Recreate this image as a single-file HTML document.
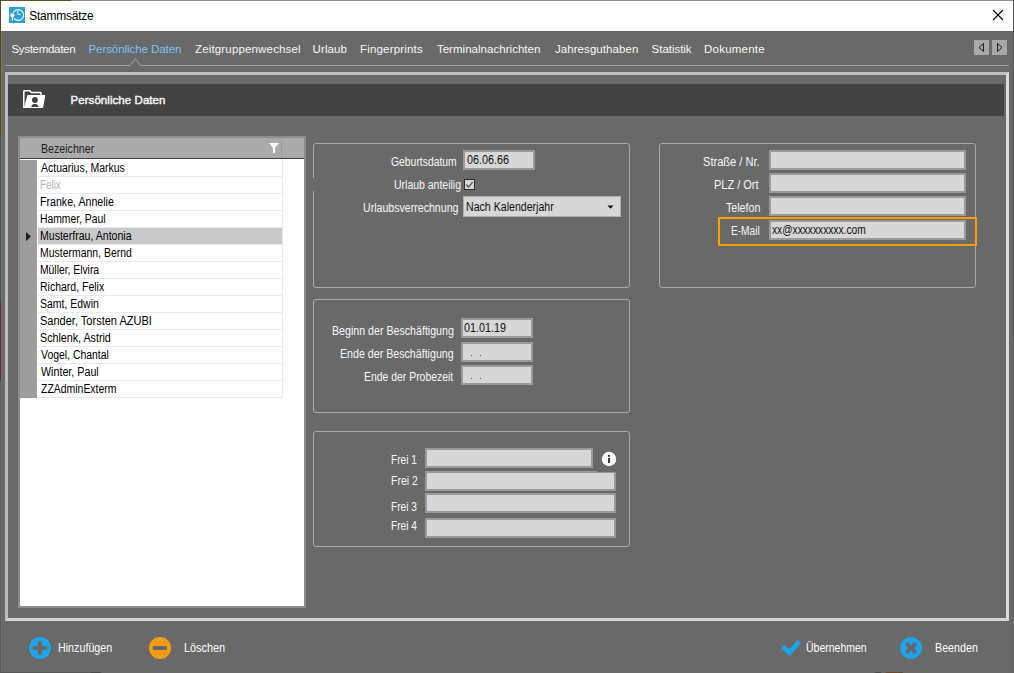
<!DOCTYPE html>
<html><head><meta charset="utf-8"><style>
html,body{margin:0;padding:0;}
body{width:1014px;height:673px;background:#696969;position:relative;overflow:hidden;font-family:"Liberation Sans", sans-serif;}
.t{position:absolute;line-height:0;white-space:pre;transform-origin:0 0;}
</style></head><body>
<div style='position:absolute;left:0px;top:0px;width:1014px;height:31px;box-sizing:border-box;background:#fff'></div><div style='position:absolute;left:0px;top:0px;width:1014px;height:1px;box-sizing:border-box;background:#8e8e8e'></div><div style='position:absolute;left:0px;top:0px;width:71px;height:1px;box-sizing:border-box;background:#6b4f22'></div><div style='position:absolute;left:0px;top:0px;width:1px;height:136px;box-sizing:border-box;background:#5e4520'></div><div style='position:absolute;left:0px;top:136px;width:1px;height:165px;box-sizing:border-box;background:#3f5a3c'></div><div style='position:absolute;left:0px;top:301px;width:1px;height:80px;box-sizing:border-box;background:#5a3030'></div><div style='position:absolute;left:0px;top:381px;width:1px;height:292px;box-sizing:border-box;background:#5c5c5c'></div><div style='position:absolute;left:1013px;top:0px;width:1px;height:341px;box-sizing:border-box;background:#555555'></div><div style='position:absolute;left:1013px;top:341px;width:1px;height:332px;box-sizing:border-box;background:#626262'></div><div style='position:absolute;left:1px;top:31px;width:1px;height:270px;box-sizing:border-box;background:#74787c'></div><div style='position:absolute;left:1px;top:301px;width:1px;height:372px;box-sizing:border-box;background:#6e7072'></div><div style='position:absolute;left:0px;top:672px;width:91px;height:1px;box-sizing:border-box;background:#575757'></div><div style='position:absolute;left:91px;top:672px;width:10px;height:1px;box-sizing:border-box;background:#4a4a4a'></div><div style='position:absolute;left:875px;top:672px;width:6px;height:1px;box-sizing:border-box;background:#4a4a4a'></div><div style='position:absolute;left:886px;top:672px;width:17px;height:1px;box-sizing:border-box;background:#6a4a2a'></div><svg style='position:absolute;left:9px;top:7px' width='16' height='16' viewBox='0 0 16 16'><rect width='16' height='16' fill='#2aa0dc'/><circle cx='9.2' cy='8' r='5.4' fill='none' stroke='#fff' stroke-width='1.1'/><path d='M8.9 3.8 V7.6 H11.6' fill='none' stroke='#fff' stroke-width='1'/><circle cx='3.4' cy='8.6' r='3.2' fill='#2aa0dc'/><rect x='2.2' y='11' width='2.4' height='4' fill='#2aa0dc'/><circle cx='3.4' cy='8.4' r='2.1' fill='#fff'/><rect x='2.8' y='9.5' width='1.2' height='4.2' fill='#fff'/></svg><svg style='position:absolute;left:992px;top:9px' width='12' height='12' viewBox='0 0 12 12'><path d='M1 1 L11 11 M11 1 L1 11' stroke='#000' stroke-width='1.1'/></svg><svg style='position:absolute;left:0;top:55px' width='1014' height='14' viewBox='0 0 1014 14'><path d='M5 10.5 H130 L135.5 3.5 L140.3 10.5 H1009' fill='none' stroke='#a3a3a3' stroke-width='1'/></svg><div style='position:absolute;left:974px;top:40px;width:15px;height:15px;box-sizing:border-box;background:#a8a8a8'></div><div style='position:absolute;left:992px;top:40px;width:15px;height:15px;box-sizing:border-box;background:#a8a8a8'></div><svg style='position:absolute;left:974px;top:40px' width='15' height='15' viewBox='0 0 15 15'><path d='M9.5 3.5 L5 7.5 L9.5 11.5 Z' fill='none' stroke='#1a1a1a' stroke-width='1'/></svg><svg style='position:absolute;left:992px;top:40px' width='15' height='15' viewBox='0 0 15 15'><path d='M5.5 3.5 L10 7.5 L5.5 11.5 Z' fill='none' stroke='#1a1a1a' stroke-width='1'/></svg><div style='position:absolute;left:5px;top:72px;width:1004px;height:549px;box-sizing:border-box;border:3px solid;border-color:#c0c0c0 #dcdcdc #d4d4d4 #bcbcbc'></div><div style='position:absolute;left:8px;top:84px;width:996px;height:32px;box-sizing:border-box;background:#434343'></div><svg style='position:absolute;left:18px;top:86px' width='32' height='28' viewBox='0 0 32 28'><path d='M5.8 21.2 V5.5 Q5.8 4.8 6.5 4.8 H11.8 L13.4 6.6 H22.3 Q23 6.6 23 7.3 V9' fill='none' stroke='#fff' stroke-width='1.5'/><path d='M9.4 9 H26.6 Q27.3 9 27.2 9.7 L25.2 21.3 Q25 22 24.3 22 H5 V21 L6.4 20.4 Z' fill='#fff'/><circle cx='16.9' cy='14' r='2.9' fill='#434343'/><path d='M13 20.9 L14.6 18.4 Q15 18 15.6 18 H18.2 Q18.8 18 19.2 18.4 L20.8 20.9 Z' fill='#434343'/></svg><div style='position:absolute;left:18px;top:136px;width:288px;height:472px;box-sizing:border-box;background:#fff;border:2px solid #8d8d8d'></div><div style='position:absolute;left:20px;top:138px;width:284px;height:20px;box-sizing:border-box;background:#aaaaaa'></div><div style='position:absolute;left:281px;top:140px;width:1px;height:18px;box-sizing:border-box;background:#9c9c9c'></div><div style='position:absolute;left:20px;top:158px;width:284px;height:1px;box-sizing:border-box;background:#404040'></div><div style='position:absolute;left:20px;top:160px;width:17px;height:238px;box-sizing:border-box;background:#9d9d9d'></div><div style='position:absolute;left:38px;top:176px;width:244px;height:1px;box-sizing:border-box;background:#eaeaea'></div><div style='position:absolute;left:38px;top:193px;width:244px;height:1px;box-sizing:border-box;background:#eaeaea'></div><div style='position:absolute;left:38px;top:210px;width:244px;height:1px;box-sizing:border-box;background:#eaeaea'></div><div style='position:absolute;left:38px;top:227px;width:244px;height:1px;box-sizing:border-box;background:#eaeaea'></div><div style='position:absolute;left:38px;top:244px;width:244px;height:1px;box-sizing:border-box;background:#eaeaea'></div><div style='position:absolute;left:38px;top:261px;width:244px;height:1px;box-sizing:border-box;background:#eaeaea'></div><div style='position:absolute;left:38px;top:278px;width:244px;height:1px;box-sizing:border-box;background:#eaeaea'></div><div style='position:absolute;left:38px;top:295px;width:244px;height:1px;box-sizing:border-box;background:#eaeaea'></div><div style='position:absolute;left:38px;top:312px;width:244px;height:1px;box-sizing:border-box;background:#eaeaea'></div><div style='position:absolute;left:38px;top:329px;width:244px;height:1px;box-sizing:border-box;background:#eaeaea'></div><div style='position:absolute;left:38px;top:346px;width:244px;height:1px;box-sizing:border-box;background:#eaeaea'></div><div style='position:absolute;left:38px;top:363px;width:244px;height:1px;box-sizing:border-box;background:#eaeaea'></div><div style='position:absolute;left:38px;top:380px;width:244px;height:1px;box-sizing:border-box;background:#eaeaea'></div><div style='position:absolute;left:38px;top:397px;width:244px;height:1px;box-sizing:border-box;background:#eaeaea'></div><div style='position:absolute;left:282px;top:159px;width:1px;height:239px;box-sizing:border-box;background:#eaeaea'></div><div style='position:absolute;left:38px;top:228px;width:244px;height:16px;box-sizing:border-box;background:#c9c9c9'></div><svg style='position:absolute;left:25px;top:231px' width='8' height='11' viewBox='0 0 8 11'><path d='M1 1 L6 5.5 L1 10 Z' fill='#202020'/></svg><svg style='position:absolute;left:268px;top:142px' width='12' height='12' viewBox='0 0 12 12'><path d='M1 1 H11 L7 6 V11 H5 V6 Z' fill='#fff'/></svg><div style='position:absolute;left:313px;top:143px;width:317px;height:145px;box-sizing:border-box;border:1px solid #a9a9a9;border-radius:3px'></div><div style='position:absolute;left:312px;top:178px;width:3px;height:13px;box-sizing:border-box;background:#696969'></div><div style='position:absolute;left:313px;top:299px;width:317px;height:114px;box-sizing:border-box;border:1px solid #a9a9a9;border-radius:3px'></div><div style='position:absolute;left:313px;top:431px;width:317px;height:116px;box-sizing:border-box;border:1px solid #a9a9a9;border-radius:3px'></div><div style='position:absolute;left:659px;top:143px;width:317px;height:145px;box-sizing:border-box;border:1px solid #a9a9a9;border-radius:3px'></div><div style='position:absolute;left:463px;top:150px;width:72px;height:20px;box-sizing:border-box;background:#d7d7d7;border:2px solid #9a9a9a'></div><div style='position:absolute;left:464px;top:179px;width:11px;height:11px;box-sizing:border-box;background:#d8d8d8;border:1px solid #2a2a2a'></div><svg style='position:absolute;left:464px;top:179px' width='11' height='11' viewBox='0 0 11 11'><path d='M2.2 5.4 L4.5 8 L8.7 3.1' fill='none' stroke='#636363' stroke-width='1.5'/></svg><div style='position:absolute;left:463px;top:196px;width:158px;height:21px;box-sizing:border-box;background:#d7d7d7;border:1px solid #b0b0b0'></div><svg style='position:absolute;left:606px;top:204px' width='9' height='7' viewBox='0 0 9 7'><path d='M1.5 1.5 H7.5 L4.5 4.8 Z' fill='#111'/></svg><div style='position:absolute;left:461px;top:318px;width:72px;height:20px;box-sizing:border-box;background:#d7d7d7;border:2px solid #9a9a9a'></div><div style='position:absolute;left:461px;top:342px;width:72px;height:20px;box-sizing:border-box;background:#d7d7d7;border:2px solid #9a9a9a'></div><div style='position:absolute;left:461px;top:365px;width:72px;height:20px;box-sizing:border-box;background:#d7d7d7;border:2px solid #9a9a9a'></div><div style='position:absolute;left:471px;top:355px;width:1px;height:1px;box-sizing:border-box;background:#5a4a5a'></div><div style='position:absolute;left:480px;top:355px;width:1px;height:1px;box-sizing:border-box;background:#5a4a5a'></div><div style='position:absolute;left:471px;top:378px;width:1px;height:1px;box-sizing:border-box;background:#5a4a5a'></div><div style='position:absolute;left:480px;top:378px;width:1px;height:1px;box-sizing:border-box;background:#5a4a5a'></div><div style='position:absolute;left:425px;top:448px;width:168px;height:20px;box-sizing:border-box;background:#d7d7d7;border:2px solid #9a9a9a'></div><div style='position:absolute;left:425px;top:471px;width:191px;height:20px;box-sizing:border-box;background:#d7d7d7;border:2px solid #9a9a9a'></div><div style='position:absolute;left:597px;top:471px;width:19px;height:1px;box-sizing:border-box;background:#696969'></div><div style='position:absolute;left:425px;top:493px;width:191px;height:20px;box-sizing:border-box;background:#d7d7d7;border:2px solid #9a9a9a'></div><div style='position:absolute;left:425px;top:518px;width:191px;height:20px;box-sizing:border-box;background:#d7d7d7;border:2px solid #9a9a9a'></div><svg style='position:absolute;left:601px;top:451px' width='16' height='16' viewBox='0 0 16 16'><circle cx='8' cy='8' r='7.2' fill='#fff'/><rect x='7' y='7' width='2' height='5' fill='#3a3a3a'/><rect x='7' y='4' width='2' height='1.8' fill='#3a3a3a'/></svg><div style='position:absolute;left:769px;top:150px;width:197px;height:20px;box-sizing:border-box;background:#d7d7d7;border:2px solid #9a9a9a'></div><div style='position:absolute;left:769px;top:173px;width:197px;height:20px;box-sizing:border-box;background:#d7d7d7;border:2px solid #9a9a9a'></div><div style='position:absolute;left:769px;top:196px;width:197px;height:20px;box-sizing:border-box;background:#d7d7d7;border:2px solid #9a9a9a'></div><div style='position:absolute;left:769px;top:220px;width:197px;height:20px;box-sizing:border-box;background:#d7d7d7;border:2px solid #9a9a9a'></div><div style='position:absolute;left:718px;top:217px;width:259px;height:29px;box-sizing:border-box;border:2px solid #ffa000'></div><svg style='position:absolute;left:28px;top:636px' width='24' height='24' viewBox='0 0 24 24'><circle cx='12' cy='12' r='11' fill='#1ea3e6'/><rect x='4.8' y='10' width='14' height='4' fill='#696969'/><rect x='9.8' y='5' width='4' height='14' fill='#696969'/></svg><svg style='position:absolute;left:148px;top:636px' width='24' height='24' viewBox='0 0 24 24'><circle cx='12' cy='12' r='11' fill='#f39c12'/><rect x='4.8' y='10' width='14' height='4' fill='#696969'/></svg><svg style='position:absolute;left:778px;top:636px' width='26' height='24' viewBox='0 0 26 24'><path d='M4.6 10.6 L11.4 16.6 L21.3 5.7' fill='none' stroke='#1ea3e6' stroke-width='4.8'/></svg><svg style='position:absolute;left:899px;top:636px' width='24' height='24' viewBox='0 0 24 24'><circle cx='12' cy='12' r='11' fill='#1ea3e6'/><path d='M7.3 7.3 L16.7 16.7 M16.7 7.3 L7.3 16.7' stroke='#696969' stroke-width='4'/></svg>
<div class=t style='left:29.2px;top:16px;font-size:12px;font-weight:400;letter-spacing:-0.244px;color:#000;'>Stammsätze</div><div class=t style='left:11.4px;top:49px;font-size:11.5px;font-weight:400;letter-spacing:-0.29px;color:#f8f8f8;'>Systemdaten</div><div class=t style='left:88.5px;top:49px;font-size:11.5px;font-weight:400;letter-spacing:-0.069px;color:#7cc3f3;'>Persönliche Daten</div><div class=t style='left:195.0px;top:49px;font-size:11.5px;font-weight:400;letter-spacing:0.159px;color:#f8f8f8;'>Zeitgruppenwechsel</div><div class=t style='left:312.6px;top:49px;font-size:11.5px;font-weight:400;letter-spacing:0.08px;color:#f8f8f8;'>Urlaub</div><div class=t style='left:360.0px;top:49px;font-size:11.5px;font-weight:400;letter-spacing:0.182px;color:#f8f8f8;'>Fingerprints</div><div class=t style='left:436.9px;top:49px;font-size:11.5px;font-weight:400;letter-spacing:0.033px;color:#f8f8f8;'>Terminalnachrichten</div><div class=t style='left:555.0px;top:49px;font-size:11.5px;font-weight:400;letter-spacing:0.062px;color:#f8f8f8;'>Jahresguthaben</div><div class=t style='left:651.6px;top:49px;font-size:11.5px;font-weight:400;letter-spacing:-0.038px;color:#f8f8f8;'>Statistik</div><div class=t style='left:704.1px;top:49px;font-size:11.5px;font-weight:400;letter-spacing:0.212px;color:#f8f8f8;'>Dokumente</div><div class=t style='left:70.5px;top:100px;font-size:11.5px;font-weight:400;letter-spacing:0.062px;color:#f8f8f8;-webkit-text-stroke:0.45px #f2f2f2;'>Persönliche Daten</div><div class=t style='left:41.41px;top:149px;font-size:12px;font-weight:400;transform:scaleX(0.8864);color:#1e1e1e;'>Bezeichner</div><div class=t style='left:41.3px;top:168px;font-size:12px;font-weight:400;transform:scaleX(0.8729);color:#000;'>Actuarius, Markus</div><div class=t style='left:40.48px;top:185px;font-size:12px;font-weight:400;transform:scaleX(0.8208);color:#b4b4b4;'>Felix</div><div class=t style='left:40.41px;top:202px;font-size:12px;font-weight:400;transform:scaleX(0.8854);color:#000;'>Franke, Annelie</div><div class=t style='left:40.44px;top:219px;font-size:12px;font-weight:400;transform:scaleX(0.8627);color:#000;'>Hammer, Paul</div><div class=t style='left:40.42px;top:236px;font-size:12px;font-weight:400;transform:scaleX(0.8796);color:#000;'>Musterfrau, Antonia</div><div class=t style='left:40.43px;top:253px;font-size:12px;font-weight:400;transform:scaleX(0.8712);color:#000;'>Mustermann, Bernd</div><div class=t style='left:40.44px;top:270px;font-size:12px;font-weight:400;transform:scaleX(0.8603);color:#000;'>Müller, Elvira</div><div class=t style='left:40.42px;top:287px;font-size:12px;font-weight:400;transform:scaleX(0.875);color:#000;'>Richard, Felix</div><div class=t style='left:40.43px;top:304px;font-size:12px;font-weight:400;transform:scaleX(0.8727);color:#000;'>Samt, Edwin</div><div class=t style='left:40.38px;top:321px;font-size:12px;font-weight:400;transform:scaleX(0.9183);color:#000;'>Sander, Torsten AZUBI</div><div class=t style='left:40.41px;top:338px;font-size:12px;font-weight:400;transform:scaleX(0.8923);color:#000;'>Schlenk, Astrid</div><div class=t style='left:41.3px;top:355px;font-size:12px;font-weight:400;transform:scaleX(0.8692);color:#000;'>Vogel, Chantal</div><div class=t style='left:41.3px;top:372px;font-size:12px;font-weight:400;transform:scaleX(0.8922);color:#000;'>Winter, Paul</div><div class=t style='left:41.3px;top:389px;font-size:12px;font-weight:400;transform:scaleX(0.8709);color:#000;'>ZZAdminExterm</div><div class=t style='left:390.5px;top:162px;font-size:12px;font-weight:400;transform:scaleX(0.8645);color:#f8f8f8;'>Geburtsdatum</div><div class=t style='left:393.73px;top:185px;font-size:12px;font-weight:400;transform:scaleX(0.8733);color:#f8f8f8;'>Urlaub anteilig</div><div class=t style='left:362.62px;top:208px;font-size:12px;font-weight:400;transform:scaleX(0.8832);color:#f8f8f8;'>Urlaubsverrechnung</div><div class=t style='left:331.71px;top:331px;font-size:12px;font-weight:400;transform:scaleX(0.8868);color:#f8f8f8;'>Beginn der Beschäftigung</div><div class=t style='left:339.61px;top:354px;font-size:12px;font-weight:400;transform:scaleX(0.8874);color:#f8f8f8;'>Ende der Beschäftigung</div><div class=t style='left:363.73px;top:377px;font-size:12px;font-weight:400;transform:scaleX(0.8686);color:#f8f8f8;'>Ende der Probezeit</div><div class=t style='left:391.46px;top:460px;font-size:12px;font-weight:400;transform:scaleX(0.8433);color:#f8f8f8;'>Frei 1</div><div class=t style='left:391.43px;top:481px;font-size:12px;font-weight:400;transform:scaleX(0.8724);color:#f8f8f8;'>Frei 2</div><div class=t style='left:391.46px;top:507px;font-size:12px;font-weight:400;transform:scaleX(0.8433);color:#f8f8f8;'>Frei 3</div><div class=t style='left:391.46px;top:526px;font-size:12px;font-weight:400;transform:scaleX(0.8433);color:#f8f8f8;'>Frei 4</div><div class=t style='left:703.18px;top:162px;font-size:12px;font-weight:400;transform:scaleX(0.9233);color:#f8f8f8;'>Straße / Nr.</div><div class=t style='left:714.39px;top:185px;font-size:12px;font-weight:400;transform:scaleX(0.9146);color:#f8f8f8;'>PLZ / Ort</div><div class=t style='left:725.5px;top:208px;font-size:12px;font-weight:400;transform:scaleX(0.8868);color:#f8f8f8;'>Telefon</div><div class=t style='left:730.56px;top:231px;font-size:12px;font-weight:400;transform:scaleX(0.8424);color:#f8f8f8;'>E-Mail</div><div class=t style='left:466.6px;top:160px;font-size:12px;font-weight:400;transform:scaleX(0.8978);color:#101010;'>06.06.66</div><div class=t style='left:466.42px;top:207px;font-size:12px;font-weight:400;transform:scaleX(0.8828);color:#101010;'>Nach Kalenderjahr</div><div class=t style='left:464.4px;top:328px;font-size:12px;font-weight:400;transform:scaleX(0.9);color:#101010;'>01.01.19</div><div class=t style='left:771.6px;top:230px;font-size:12px;font-weight:400;transform:scaleX(0.85);color:#101010;'>xx@xxxxxxxxxx.com</div><div class=t style='left:57.61px;top:648px;font-size:12px;font-weight:400;transform:scaleX(0.8932);color:#fff;'>Hinzufügen</div><div class=t style='left:184.3px;top:648px;font-size:12px;font-weight:400;transform:scaleX(0.9045);color:#fff;'>Löschen</div><div class=t style='left:805.62px;top:648px;font-size:12px;font-weight:400;transform:scaleX(0.875);color:#fff;'>Übernehmen</div><div class=t style='left:934.51px;top:648px;font-size:12px;font-weight:400;transform:scaleX(0.8915);color:#fff;'>Beenden</div>
</body></html>
